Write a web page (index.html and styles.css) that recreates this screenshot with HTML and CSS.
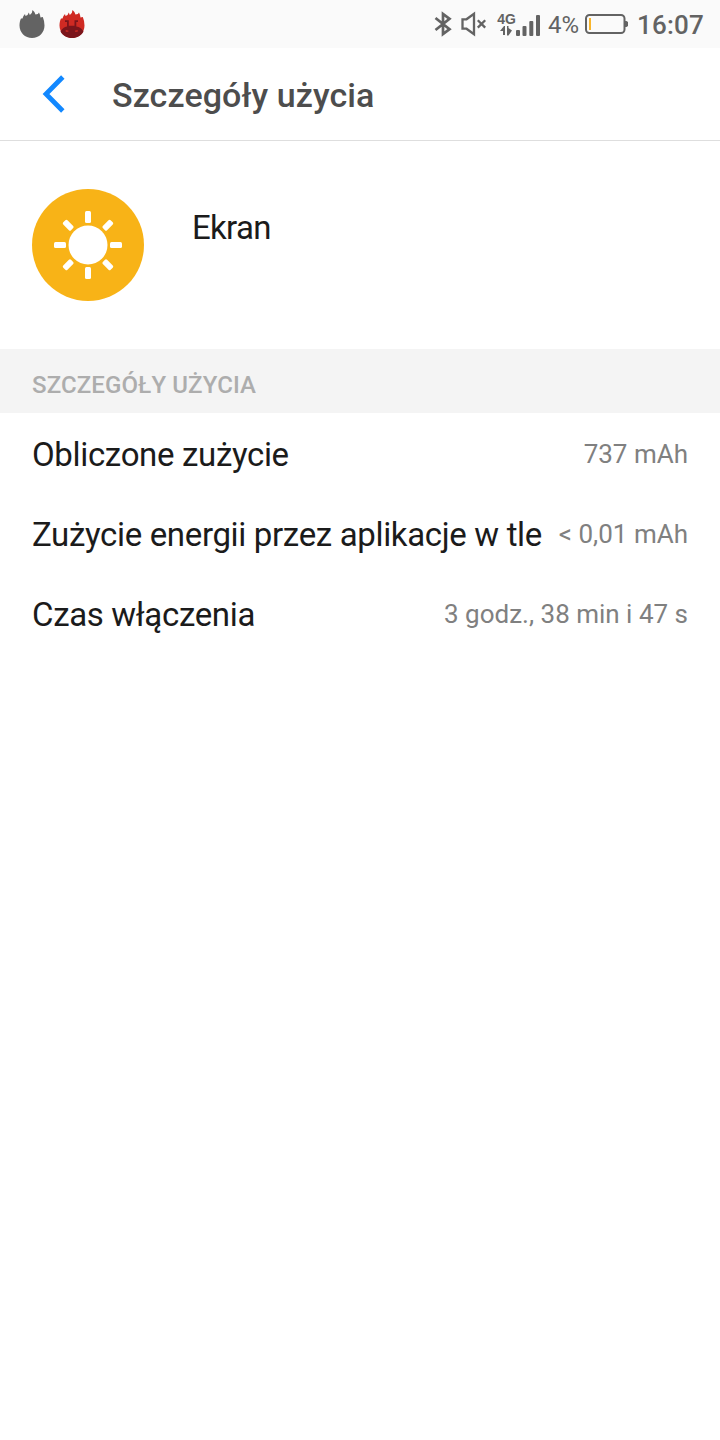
FILE: index.html
```html
<!DOCTYPE html>
<html lang="pl">
<head>
  <meta charset="UTF-8" />
  <meta name="viewport" content="width=device-width, initial-scale=1.0"/>
  <title>Szczegóły użycia</title>
  <link rel="stylesheet" href="styles.css">
</head>
<body>

<!-- Status bar -->
<div class="status-bar">
  <div class="notifications">
    <svg width="26" height="28" viewBox="0 0 26 28">
      <path fill="#636363" d="M13 28C6 28 .5 22.500 .5 15.500C.5 12.500 1 10.500 2 8.500L3.500 8.500Q4 6 6 4L6.500 6Q9.300 5 9.800 2.500L10.800 5Q13.500 3.500 13.500 0Q16 2 16.500 4.500Q19.500 4.500 20 2.500Q21.500 5.500 21.500 7.500L23.800 7Q25.500 11 25.500 15.500C25.500 22.500 20 28 13 28Z"/>
    </svg>
    <svg width="26" height="28" viewBox="0 0 26 28">
      <path fill="#cf2a23" d="M13 28C6 28 .5 22.500 .5 15.500C.5 12.500 1 10.500 2 8.500L3.500 8.500Q4 6 6 4L6.500 6Q9.300 5 9.800 2.500L10.800 5Q13.500 3.500 13.500 0Q16 2 16.500 4.500Q19.500 4.500 20 2.500Q21.500 5.500 21.500 7.500L23.800 7Q25.500 11 25.500 15.500C25.500 22.500 20 28 13 28Z"/>
      <path fill="#7b151b" d="M1.500 21.500Q4 17 8 16.500V12H6V10.200H9.800V15.800H15.500V10.200H19V12H17.300V16.500Q22 17 24.500 21.500C22.500 25.500 18 28 13 28S3.500 25.500 1.500 21.500Z"/>
      <path fill="#cf2a23" d="M6.700 20l3 .8-.5 1h-2.500zM18.700 20l-3 .8.500 1h2.500z"/>
    </svg>
  </div>
  <div class="indicators">
    <svg class="bluetooth" width="18" height="26" viewBox="0 0 18 26">
      <path fill="none" stroke="#636363" stroke-width="2.700" d="M1.500 7L15.500 18.200L9 23V3L15.500 7.800L1.500 19"/>
    </svg>
    <svg class="mute" width="26" height="26" viewBox="0 0 26 26">
      <path fill="none" stroke="#636363" stroke-width="2.300" d="M1.500 8.300H5.500L13 2.800V23.200L5.500 17.700H1.500ZM16.800 9.200L24.200 16.600M24.200 9.200L16.800 16.600"/>
    </svg>
    <div class="network">
      <span class="network-type">4G</span>
      <svg width="12" height="10" viewBox="0 0 12 10">
        <path fill="#636363" d="M0 5L4 0H5V9H3V5ZM7 0H8.500V2L12 4.500L8.500 9.500H7Z"/>
      </svg>
    </div>
    <svg class="signal" width="24" height="22" viewBox="0 0 24 22">
      <g fill="#636363">
        <rect x="0" y="15" width="4" height="6" rx="1"/>
        <rect x="6.500" y="11" width="4" height="10" rx="1"/>
        <rect x="13.300" y="6" width="4" height="15" rx="1"/>
        <rect x="20" y="0" width="4" height="21" rx="1"/>
      </g>
    </svg>
    <span class="percent">4%</span>
    <svg class="battery" width="44" height="20" viewBox="0 0 44 20">
      <rect x="1" y="1" width="38.500" height="18" rx="3.500" fill="none" stroke="#636363" stroke-width="2"/>
      <path fill="#636363" d="M40 7h1.500l1.500 1v4l-1.500 1H40z"/>
      <rect x="4" y="4" width="2" height="12" fill="#f9b52b"/>
    </svg>
    <span class="clock">16:07</span>
  </div>
</div>

<!-- Header -->
<header class="header">
  <svg class="back" width="24" height="38" viewBox="0 0 24 38">
    <path fill="none" stroke="#1288ff" stroke-width="4.800" d="M20.800 2L4 19L20.800 36"/>
  </svg>
  <h1>Szczegóły użycia</h1>
</header>

<!-- App -->
<section class="app">
  <svg width="112" height="112" viewBox="0 0 112 112">
    <circle cx="56" cy="56" r="56" fill="#f8b317"/>
    <circle cx="56" cy="56" r="19.500" fill="#fff"/>
    <g fill="#fff">
      <rect x="53" y="22" width="6" height="12" rx="1.500"/>
      <rect x="53" y="78" width="6" height="12" rx="1.500"/>
      <rect x="22" y="53" width="12" height="6" rx="1.500"/>
      <rect x="78" y="53" width="12" height="6" rx="1.500"/>
      <g transform="rotate(45 56 56)">
        <rect x="53" y="22.500" width="6" height="11" rx="1.500"/>
        <rect x="53" y="78.500" width="6" height="11" rx="1.500"/>
        <rect x="22.500" y="53" width="11" height="6" rx="1.500"/>
        <rect x="78.500" y="53" width="11" height="6" rx="1.500"/>
      </g>
    </g>
  </svg>
  <p class="app-name">Ekran</p>
</section>

<!-- Usage details -->
<section>
  <h2>SZCZEGÓŁY UŻYCIA</h2>
  <div class="row">
    <span class="label">Obliczone zużycie</span>
    <span class="value">737 mAh</span>
  </div>
  <div class="row">
    <span class="label">Zużycie energii przez aplikacje w tle</span>
    <span class="value">&lt; 0,01 mAh</span>
  </div>
  <div class="row">
    <span class="label">Czas włączenia</span>
    <span class="value">3 godz., 38 min i 47 s</span>
  </div>
</section>

</body>
</html>
```
FILE: styles.css
```css
* {
  box-sizing: border-box;
}
body {
  font-family: Roboto, sans-serif;
  background: #fff;
  color: #1b1b1b;
  margin: 0;
}
svg {
  display: block;
  flex: none;
}
.status-bar {
  display: flex;
  justify-content: space-between;
  align-items: center;
  height: 48px;
  padding: 0 16px 0 19px;
  background: #fafafa;
  color: #636363;
}
.notifications {
  display: flex;
  gap: 14px;
}
.indicators {
  display: flex;
  align-items: center;
  white-space: nowrap;
}
.mute {
  margin-left: 9px;
}
.network {
  display: flex;
  flex-direction: column;
  align-items: center;
  width: 19px;
  margin-left: 10px;
}
.network-type {
  font-family: "Liberation Sans", sans-serif;
  font-size: 14px;
  font-weight: 700;
  line-height: 13px;
}
.network svg {
  margin-right: 1px;
}
.signal {
  margin-top: 3px;
}
.percent {
  font-size: 24px;
  width: 30px;
  margin: 2px 0 0 8px;
}
.battery {
  margin-left: 7px;
}
.clock {
  font-size: 26px;
  font-weight: 500;
  width: 67px;
  margin: 2px 0 0 8px;
  letter-spacing: 0.2px;
}
.header {
  display: flex;
  align-items: center;
  height: 93px;
  padding-left: 42px;
  border-bottom: 1px solid #dedede;
}
h1 {
  font-size: 34px;
  font-weight: 500;
  line-height: 40px;
  letter-spacing: 0.1px;
  color: #4d4d4d;
  margin: 2px 0 0 46px;
}
.app {
  display: flex;
  align-items: flex-start;
  height: 208px;
  padding: 48px 32px;
}
.app-name {
  font-size: 33px;
  line-height: 38px;
  letter-spacing: -0.7px;
  margin: 20px 0 0 48px;
}
h2 {
  display: flex;
  align-items: center;
  height: 64px;
  font-size: 24px;
  font-weight: 500;
  letter-spacing: 0.12px;
  color: #adadad;
  background: #f4f4f4;
  margin: 0;
  padding: 8px 32px 0;
}
.row {
  display: flex;
  align-items: center;
  justify-content: space-between;
  height: 80px;
  padding: 2px 32px 0;
  white-space: nowrap;
}
.label {
  font-size: 33px;
  letter-spacing: -0.34px;
}
.value {
  font-size: 26px;
  color: #808080;
}
```
